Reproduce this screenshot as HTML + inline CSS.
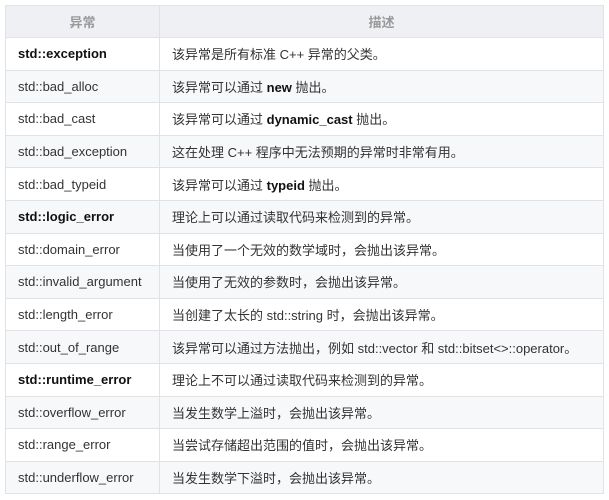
<!DOCTYPE html>
<html><head><meta charset="utf-8"><style>
body{margin:0;background:#fff;width:609px;height:500px;overflow:hidden}
table{position:absolute;left:5px;top:5px;width:599px;border-collapse:collapse;font-family:"Liberation Sans","Noto Sans CJK SC",sans-serif;font-size:13px;color:#333}
td,th{border:1px solid #e0e2e5;height:31.6px;padding:0 0 0 12px;text-align:left}
th{background:#eef0f3;color:#999;font-weight:bold;text-align:center;padding:0;height:31px}
tr:nth-child(odd) td{background:#f7f8fa}
td:first-child{width:141px}
b{color:#111}
</style></head><body>
<table>
<tr><th>异常</th><th>描述</th></tr>
<tr><td><b>std::exception</b></td><td>该异常是所有标准 C++ 异常的父类。</td></tr>
<tr><td>std::bad_alloc</td><td>该异常可以通过 <b>new</b> 抛出。</td></tr>
<tr><td>std::bad_cast</td><td>该异常可以通过 <b>dynamic_cast</b> 抛出。</td></tr>
<tr><td>std::bad_exception</td><td>这在处理 C++ 程序中无法预期的异常时非常有用。</td></tr>
<tr><td>std::bad_typeid</td><td>该异常可以通过 <b>typeid</b> 抛出。</td></tr>
<tr><td><b>std::logic_error</b></td><td>理论上可以通过读取代码来检测到的异常。</td></tr>
<tr><td>std::domain_error</td><td>当使用了一个无效的数学域时，会抛出该异常。</td></tr>
<tr><td>std::invalid_argument</td><td>当使用了无效的参数时，会抛出该异常。</td></tr>
<tr><td>std::length_error</td><td>当创建了太长的 std::string 时，会抛出该异常。</td></tr>
<tr><td>std::out_of_range</td><td>该异常可以通过方法抛出，例如 std::vector 和 std::bitset&lt;&gt;::operator。</td></tr>
<tr><td><b>std::runtime_error</b></td><td>理论上不可以通过读取代码来检测到的异常。</td></tr>
<tr><td>std::overflow_error</td><td>当发生数学上溢时，会抛出该异常。</td></tr>
<tr><td>std::range_error</td><td>当尝试存储超出范围的值时，会抛出该异常。</td></tr>
<tr><td>std::underflow_error</td><td>当发生数学下溢时，会抛出该异常。</td></tr>
</table>
</body></html>
